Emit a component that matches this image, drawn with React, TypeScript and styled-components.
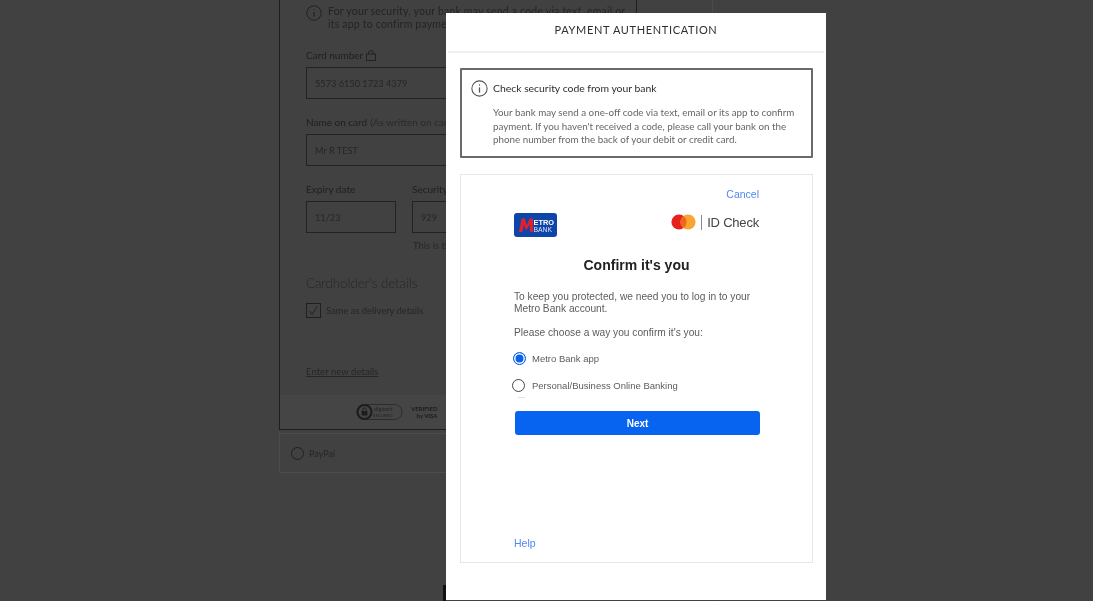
import React from 'react';
import styled, { createGlobalStyle } from 'styled-components';

const GlobalStyle = createGlobalStyle`
  html, body {
    margin: 0;
    padding: 0;
    background: #414141;
  }
  * {
    box-sizing: border-box;
  }
`;

const InfoIcon = ({ size, color }: { size: number; color: string }) => (
  <svg width={size} height={size} viewBox="0 0 24 24" fill="none" stroke={color} strokeWidth="1.5" style={{ flexShrink: 0 }}>
    <circle cx="12" cy="12" r="10.8" />
    <circle cx="12" cy="7" r="1" fill={color} stroke="none" />
    <path d="M12 10.4v7.4" strokeWidth="1.8" />
  </svg>
);

const MetroLogo = () => (
  <svg width="43" height="24" viewBox="0 0 43 24">
    <rect width="43" height="24" rx="3" fill="#0d45a8" />
    <path d="M5 19 7.6 5.5h3.2l2 6.4 3-6.4H19v13.5h-3.2v-7.8l-3 5.4h-1.4l-1.5-5.2L8.4 19z" fill="#e2202c" />
    <text x="19.5" y="12.4" fontFamily="Liberation Sans" fontSize="7.4" fontWeight="700" fill="#fff">ETRO</text>
    <text x="19.5" y="19" fontFamily="Liberation Sans" fontSize="6.8" fill="#dfe6f5">BANK</text>
  </svg>
);

const MastercardMark = () => (
  <svg width="25" height="16" viewBox="0 0 25 16">
    <circle cx="8" cy="8" r="7.6" fill="#e8201c" />
    <circle cx="17" cy="8" r="7.6" fill="#f9a533" />
    <path d="M12.5 1.9a7.6 7.6 0 0 1 0 12.2 7.6 7.6 0 0 1 0-12.2z" fill="#f2661b" />
  </svg>
);

const DigicertBadge = () => (
  <svg width="47" height="18" viewBox="0 0 47 18" fill="none">
    <rect x="1" y="1.5" width="45" height="15" rx="7.5" stroke="#2c2c2c" />
    <circle cx="8.5" cy="9" r="7" stroke="#1d1d1d" strokeWidth="2" />
    <rect x="5.6" y="8" width="5.8" height="4.6" rx="0.6" fill="#1d1d1d" />
    <path d="M6.8 8V6.6a1.7 1.7 0 0 1 3.4 0V8" stroke="#1d1d1d" />
    <text x="18" y="8" fontFamily="Lato" fontSize="5.6" fill="#262626">digicert</text>
    <text x="17" y="14" fontFamily="Lato" fontSize="4.4" fill="#262626">SECURED</text>
  </svg>
);

const Page = styled.div`
  position: relative;
  width: 1093px;
  height: 601px;
  overflow: hidden;
  background: #414141;
  font-family: Lato, 'Liberation Sans', sans-serif;
`;

const Backdrop = styled.div`
  width: 434px;
  margin-left: 279px;
  height: 601px;
  display: flex;
  flex-direction: column;
  color: #1f1f1f;
  filter: blur(0.5px);
  border-right: 1px solid #4a4a4a;
`;

const FormPanel = styled.div`
  width: 358px;
  height: 430px;
  border: 1px solid #1e1e1e;
  border-top: 0;
  display: flex;
  flex-direction: column;
`;

const FormBody = styled.div`
  flex: 1;
  padding: 5px 0 0 26px;
  display: flex;
  flex-direction: column;
`;

const SecurityNote = styled.div`
  display: flex;
  gap: 6px;
  height: 43px;
  font-size: 10.5px;
  letter-spacing: 0.2px;
  line-height: 13px;
  color: #242424;
  white-space: nowrap;
  align-items: flex-start;
`;

const FieldLabel = styled.div<{ $top: number }>`
  display: flex;
  align-items: center;
  gap: 3px;
  margin-top: ${(p) => p.$top}px;
  height: 14px;
  font-size: 10px;
  color: #1f1f1f;
  white-space: nowrap;
`;

const Hint = styled.span`
  color: #2a2a2a;
`;

const Field = styled.div<{ $width: number }>`
  width: ${(p) => p.$width}px;
  height: 32px;
  margin-top: 5px;
  padding-left: 8px;
  border: 1px solid #222;
  display: flex;
  align-items: center;
  font-size: 9.2px;
  color: #262626;
  flex-shrink: 0;
`;

const FieldRow = styled.div`
  display: flex;
  gap: 16px;
`;

const FieldColumn = styled.div`
  display: flex;
  flex-direction: column;
`;

const FieldHelp = styled.div`
  margin-top: 6px;
  margin-left: 107px;
  font-size: 9.5px;
  line-height: 13px;
  color: #262626;
`;

const SectionTitle = styled.div`
  margin-top: 23px;
  font-size: 13.2px;
  line-height: 16px;
  font-weight: 300;
  color: #262626;
  white-space: nowrap;
`;

const CheckRow = styled.div`
  display: flex;
  align-items: center;
  gap: 5px;
  margin-top: 12px;
  font-size: 9.4px;
  color: #262626;
`;

const CheckBox = styled.div`
  width: 15px;
  height: 15px;
  border: 1px solid #1f1f1f;
  display: flex;
  align-items: center;
  justify-content: center;
`;

const EnterLink = styled.div`
  margin-top: 48px;
  font-size: 9.6px;
  line-height: 12px;
  color: #262626;
  text-decoration: underline;
`;

const FormFooter = styled.div`
  height: 34px;
  background: #454545;
  display: flex;
  align-items: center;
  padding-left: 76px;
  gap: 8px;
`;

const VerifiedVisa = styled.div`
  font-size: 6px;
  font-weight: 700;
  line-height: 7px;
  text-align: right;
  color: #1c1c1c;
`;

const PayPalRow = styled.div`
  width: 358px;
  height: 40px;
  margin-top: 3px;
  border: 1px solid #4c4c4c;
  display: flex;
  align-items: center;
  gap: 5px;
  padding-left: 11px;
  font-size: 9px;
  color: #262626;
`;

const PayPalRadio = styled.div`
  width: 13px;
  height: 13px;
  border-radius: 50%;
  border: 1px solid #202020;
`;

const EdgeShade = styled.div`
  position: absolute;
  left: 443px;
  top: 585px;
  width: 3px;
  height: 16px;
  background: #111;
`;

const Modal = styled.div`
  position: absolute;
  left: 446px;
  top: 13px;
  width: 380px;
  height: 587px;
  background: #fff;
  display: flex;
  flex-direction: column;
  filter: blur(0.35px);
`;

const ModalHeader = styled.div`
  height: 40px;
  flex-shrink: 0;
  margin: 0 2px;
  border-bottom: 2px solid #f0f0f0;
  display: flex;
  align-items: center;
  justify-content: center;
  font-size: 11px;
  letter-spacing: 0.65px;
  color: #2f2f2f;
  padding-bottom: 5px;
`;

const ModalBody = styled.div`
  flex: 1;
  padding: 15px 13px 37px 14px;
  display: flex;
  flex-direction: column;
  gap: 16px;
`;

const Notice = styled.div`
  height: 90px;
  flex-shrink: 0;
  border: 2px solid #6a6a6a;
  border-radius: 1px;
  padding: 8px 9px 0 9px;
`;

const NoticeTitle = styled.div`
  display: flex;
  align-items: center;
  gap: 5px;
  font-size: 10.4px;
  color: #2c2c2c;
  height: 20px;
`;

const NoticeText = styled.div`
  margin-top: 8px;
  padding-left: 22px;
  font-size: 9.8px;
  line-height: 13.5px;
  color: #666;
  white-space: nowrap;
`;

const BankFrame = styled.div`
  flex: 1;
  border: 1px solid #e6e6e6;
  padding: 11px 53px 11px 53px;
  display: flex;
  flex-direction: column;
  font-family: 'Liberation Sans', Arial, sans-serif;
`;

const FrameLink = styled.div<{ $end?: boolean }>`
  font-size: 10.5px;
  line-height: 16px;
  color: #4f86f7;
  align-self: ${(p) => (p.$end ? 'flex-end' : 'flex-start')};
`;

const BrandRow = styled.div`
  display: flex;
  justify-content: space-between;
  align-items: flex-start;
  margin-top: 11px;
  height: 33px;
`;

const IdCheck = styled.div`
  display: flex;
  align-items: center;
  gap: 5px;
  margin-top: 1px;
  font-size: 13px;
  letter-spacing: -0.2px;
  color: #444;
`;

const Divider = styled.div`
  width: 1px;
  height: 15px;
  background: #8a8a8a;
`;

const FrameTitle = styled.h1`
  margin: 10px 0 0;
  font-size: 14px;
  line-height: 18px;
  font-weight: 700;
  text-align: center;
  color: #222;
`;

const Paragraph = styled.p<{ $top: number }>`
  margin: ${(p) => p.$top}px 0 0;
  font-size: 10.2px;
  line-height: 12px;
  color: #5c5c5c;
  white-space: nowrap;
`;

const RadioOption = styled.div<{ $top: number; $shift: number; $gap: number }>`
  display: flex;
  align-items: center;
  gap: ${(p) => p.$gap}px;
  margin: ${(p) => p.$top}px 0 0 ${(p) => p.$shift}px;
  font-size: 9.5px;
  line-height: 13px;
  color: #5c5c5c;
`;

const RadioDot = styled.span<{ $checked?: boolean }>`
  width: 13px;
  height: 13px;
  flex-shrink: 0;
  border-radius: 50%;
  border: ${(p) => (p.$checked ? '1.5px solid #0b62e8' : '1.5px solid #444')};
  background: ${(p) => (p.$checked ? '#0b62e8' : '#fff')};
  box-shadow: ${(p) => (p.$checked ? 'inset 0 0 0 1.5px #fff' : 'none')};
`;

const ClippedOption = styled.div`
  width: 7px;
  height: 1px;
  margin: 5px 0 0 4px;
  background: #d5e2f5;
`;

const NextButton = styled.button`
  margin: 13px 0 0 1px;
  width: 245px;
  height: 24px;
  flex-shrink: 0;
  border: 0;
  border-radius: 3px;
  background: #0764f0;
  color: #fff;
  font-family: 'Liberation Sans', Arial, sans-serif;
  font-size: 10px;
  font-weight: 700;
`;

const Spacer = styled.div`
  flex: 1;
`;

export default function App() {
  return (
    <Page>
      <GlobalStyle />
      <Backdrop>
        <FormPanel>
          <FormBody>
            <SecurityNote>
              <InfoIcon size={16} color="#222" />
              <div>
                For your security, your bank may send a code via text, email or
                <br />
                its app to confirm payment.
              </div>
            </SecurityNote>
            <FieldLabel $top={0}>
              Card number
              <svg width="10" height="11" viewBox="0 0 10 11" fill="none" stroke="#222">
                <rect x="0.5" y="4" width="9" height="6.5" />
                <path d="M2.5 4V3a2.5 2.5 0 0 1 5 0v1" />
              </svg>
            </FieldLabel>
            <Field $width={300}>5573 6150 1723 4379</Field>
            <FieldLabel $top={16}>
              Name on card <Hint>(As written on card)</Hint>
            </FieldLabel>
            <Field $width={300}>Mr R TEST</Field>
            <FieldRow>
              <FieldColumn>
                <FieldLabel $top={16}>Expiry date</FieldLabel>
                <Field $width={90}>11/23</Field>
              </FieldColumn>
              <FieldColumn>
                <FieldLabel $top={16}>Security code</FieldLabel>
                <Field $width={90}>929</Field>
              </FieldColumn>
            </FieldRow>
            <FieldHelp>This is the last 3 digits</FieldHelp>
            <SectionTitle>Cardholder's details</SectionTitle>
            <CheckRow>
              <CheckBox>
                <svg width="11" height="11" viewBox="0 0 11 11" fill="none" stroke="#222" strokeWidth="1">
                  <path d="M1.5 6 4 9.5 9.5 1" />
                </svg>
              </CheckBox>
              Same as delivery details
            </CheckRow>
            <EnterLink>Enter new details</EnterLink>
          </FormBody>
          <FormFooter>
            <DigicertBadge />
            <VerifiedVisa>
              VERIFIED
              <br />
              by VISA
            </VerifiedVisa>
          </FormFooter>
        </FormPanel>
        <PayPalRow>
          <PayPalRadio />
          PayPal
        </PayPalRow>
      </Backdrop>

      <EdgeShade />
      <Modal>
        <ModalHeader>PAYMENT AUTHENTICATION</ModalHeader>
        <ModalBody>
          <Notice>
            <NoticeTitle>
              <InfoIcon size={17} color="#555" />
              Check security code from your bank
            </NoticeTitle>
            <NoticeText>
              Your bank may send a one-off code via text, email or its app to confirm
              <br />
              payment. If you haven't received a code, please call your bank on the
              <br />
              phone number from the back of your debit or credit card.
            </NoticeText>
          </Notice>
          <BankFrame>
            <FrameLink $end>Cancel</FrameLink>
            <BrandRow>
              <MetroLogo />
              <IdCheck>
                <MastercardMark />
                <Divider />
                ID Check
              </IdCheck>
            </BrandRow>
            <FrameTitle>Confirm it's you</FrameTitle>
            <Paragraph $top={17}>
              To keep you protected, we need you to log in to your
              <br />
              Metro Bank account.
            </Paragraph>
            <Paragraph $top={12}>Please choose a way you confirm it's you:</Paragraph>
            <RadioOption $top={13} $shift={-1} $gap={6}>
              <RadioDot $checked />
              Metro Bank app
            </RadioOption>
            <RadioOption $top={14} $shift={-2} $gap={7}>
              <RadioDot />
              Personal/Business Online Banking
            </RadioOption>
            <ClippedOption />
            <NextButton>Next</NextButton>
            <Spacer />
            <FrameLink>Help</FrameLink>
          </BankFrame>
        </ModalBody>
      </Modal>
    </Page>
  );
}
